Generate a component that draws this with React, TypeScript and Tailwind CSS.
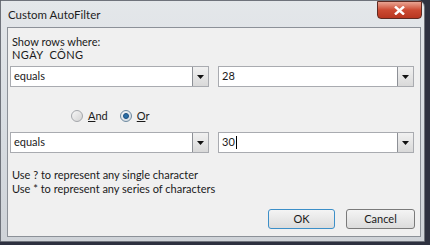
import React from "react";

const font = { fontFamily: 'Lato, "Noto Sans", sans-serif' };

function Arrow() {
  return (
    <svg width="7" height="4" viewBox="0 0 7 4">
      <path d="M0 0h7L3.5 4z" fill="#111" />
    </svg>
  );
}

function Combo({ value, w, caret }: { value: string; w: string; caret?: boolean }) {
  return (
    <div className={`${w} h-[21px] flex bg-white border border-[#a9abb0]`}>
      <div className="flex-1 flex items-center pl-[3px] text-[11px] text-[#1a1a1a]">
        {value}
        {caret && <span className="w-px h-[13px] bg-black ml-px" />}
      </div>
      <div className="w-[16px] h-full flex items-center justify-center border-l border-[#8d9096] bg-gradient-to-b from-[#f1f1f1] to-[#d9d9d9]">
        <Arrow />
      </div>
    </div>
  );
}

export default function App() {
  return (
    <div className="w-[430px] h-[245px] bg-[#2e3140] overflow-hidden" style={font}>
      <div className="w-[425px] h-[242px] rounded-tr-[7px] bg-gradient-to-b from-[#e4e7ea] via-[#d8dde2] to-[#cfd3d8] border border-[#6f737b] flex flex-col">
        <div className="h-[26px] flex items-start justify-between">
          <div className="pl-[7px] pt-[6px] text-[11.5px] text-[#1e1e1e] leading-[16px]">Custom AutoFilter</div>
          <div className="mr-[2px] w-[45px] h-[18px] rounded-b-[4px] border border-[#5e2a22] bg-gradient-to-b from-[#e8a493] via-[#cc4a32] to-[#b83620] flex items-center justify-center">
            <svg width="11" height="9" viewBox="0 0 11 9">
              <path d="M1 0.5l9 8M10 0.5l-9 8" stroke="#fff" strokeWidth="2.4" />
            </svg>
          </div>
        </div>
        <div className="ml-[6px] mr-[3px] h-[210px] border border-[#8c9198] bg-[#f0f0f0] flex flex-col text-[11px] text-[#1a1a1a]">
          <div className="pl-[4px] pt-[7px] leading-[13px]">Show rows where:</div>
          <div className="pl-[4px] leading-[13px] tracking-[0.4px]">NGÀY&nbsp; CÔNG</div>
          <div className="flex gap-[9px] pl-[2px] pt-[5px]">
            <Combo value="equals" w="w-[199px]" />
            <Combo value="28" w="w-[196px]" />
          </div>
          <div className="flex items-center pl-[63px] pt-[22px] leading-[13px]">
            <span className="w-[12px] h-[12px] rounded-full border border-[#a4a7ab] bg-gradient-to-br from-[#f6f6f6] to-[#d4d4d4]" />
            <span className="ml-[5px]"><span className="underline">A</span>nd</span>
            <span className="ml-[12px] w-[12px] h-[12px] rounded-full border border-[#6e8aa0] bg-gradient-to-br from-[#f4f6f8] to-[#cfd8e0] flex items-center justify-center">
              <span className="w-[6px] h-[6px] rounded-full bg-[#2a6fa8] border border-[#1d4f7e]" />
            </span>
            <span className="ml-[5px]"><span className="underline">O</span>r</span>
          </div>
          <div className="flex gap-[9px] pl-[2px] pt-[10px]">
            <Combo value="equals" w="w-[199px]" />
            <Combo value="30" w="w-[196px]" caret />
          </div>
          <div className="pl-[4px] pt-[15px] leading-[14px]">Use ? to represent any single character</div>
          <div className="pl-[4px] leading-[14px]">Use * to represent any series of characters</div>
          <div className="flex justify-end gap-[11px] pr-[5px] pt-[13px]">
            <div className="w-[67px] h-[20px] rounded-[3px] border border-[#3c8fc8] bg-gradient-to-b from-[#f4f4f4] to-[#dcdcdc] flex items-center justify-center">OK</div>
            <div className="w-[69px] h-[20px] rounded-[3px] border border-[#7a7a7a] bg-gradient-to-b from-[#f4f4f4] to-[#dcdcdc] flex items-center justify-center">Cancel</div>
          </div>
        </div>
      </div>
    </div>
  );
}
